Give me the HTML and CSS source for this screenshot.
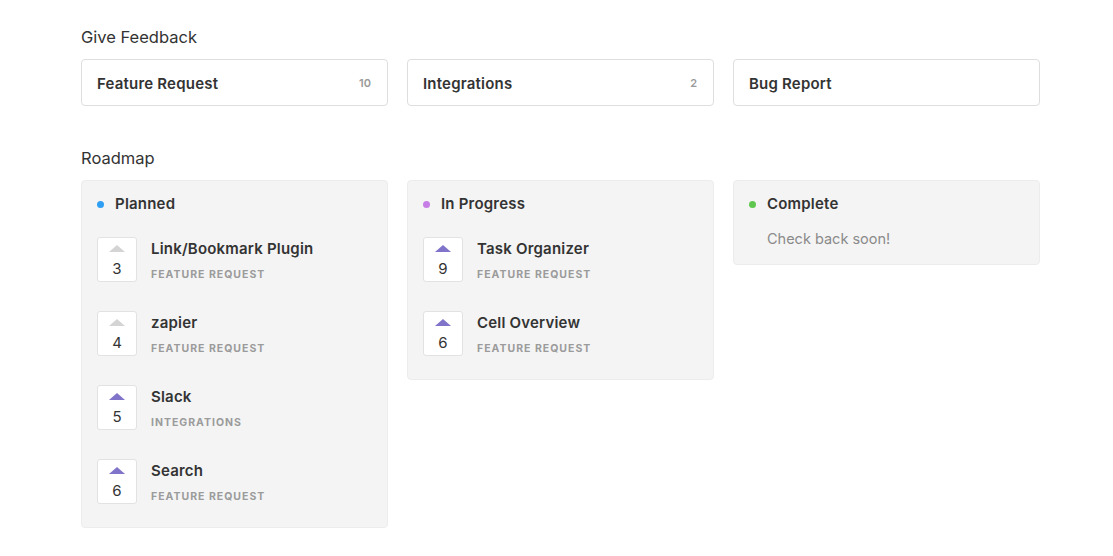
FILE: index.html
```html
<!DOCTYPE html>
<html>
<head>
<meta charset="utf-8">
<link rel="stylesheet" href="styles.css">
</head>
<body>
<div class="page">
  <h2 class="section-title">Give Feedback</h2>
  <div class="grid">
    <div class="board"><span class="board-name">Feature Request</span><span class="board-count">10</span></div>
    <div class="board"><span class="board-name">Integrations</span><span class="board-count">2</span></div>
    <div class="board"><span class="board-name">Bug Report</span></div>
  </div>

  <h2 class="section-title roadmap-title">Roadmap</h2>
  <div class="grid roadmap">
    <div class="column">
      <div class="col-head"><span class="dot dot-blue"></span>Planned</div>
      <div class="items">
        <div class="item">
          <div class="vote"><span class="tri tri-grey"></span><span class="num">3</span></div>
          <div class="info"><div class="title">Link/Bookmark Plugin</div><div class="cat">Feature Request</div></div>
        </div>
        <div class="item">
          <div class="vote"><span class="tri tri-grey"></span><span class="num">4</span></div>
          <div class="info"><div class="title">zapier</div><div class="cat">Feature Request</div></div>
        </div>
        <div class="item">
          <div class="vote"><span class="tri"></span><span class="num">5</span></div>
          <div class="info"><div class="title">Slack</div><div class="cat">Integrations</div></div>
        </div>
        <div class="item">
          <div class="vote"><span class="tri"></span><span class="num">6</span></div>
          <div class="info"><div class="title">Search</div><div class="cat">Feature Request</div></div>
        </div>
      </div>
    </div>
    <div class="column">
      <div class="col-head"><span class="dot dot-purple"></span>In Progress</div>
      <div class="items">
        <div class="item">
          <div class="vote"><span class="tri"></span><span class="num">9</span></div>
          <div class="info"><div class="title">Task Organizer</div><div class="cat">Feature Request</div></div>
        </div>
        <div class="item">
          <div class="vote"><span class="tri"></span><span class="num">6</span></div>
          <div class="info"><div class="title">Cell Overview</div><div class="cat">Feature Request</div></div>
        </div>
      </div>
    </div>
    <div class="column column-complete">
      <div class="col-head"><span class="dot dot-green"></span>Complete</div>
      <div class="empty">Check back soon!</div>
    </div>
  </div>
</div>
</body>
</html>
```
FILE: styles.css
```css
* { box-sizing: border-box; }
body {
  margin: 0;
  background: #fff;
  font-family: Inter, "Noto Sans", "Liberation Sans", sans-serif;
  color: #333;
}
.page {
  width: 959px;
  margin-left: 81px;
  padding-top: 27px;
}
.section-title {
  margin: 0 0 12px;
  font-size: 16.5px;
  line-height: 20px;
  font-weight: 400;
  color: #333;
}
.roadmap-title { margin-top: 42px; }
.grid {
  display: grid;
  grid-template-columns: repeat(3, 307px);
  column-gap: 19px;
  align-items: start;
}
.board {
  height: 47px;
  border: 1px solid #dedede;
  border-radius: 4px;
  display: flex;
  align-items: center;
  justify-content: space-between;
  padding: 1px 16px 0 15px;
}
.board-name {
  font-size: 15px;
  font-weight: 600;
  letter-spacing: 0.2px;
  color: #333;
}
.board-count {
  font-size: 11px;
  font-weight: 600;
  color: #999;
}
.column {
  background: #f4f4f4;
  border-radius: 4px;
  border: 1px solid #ececec;
  padding: 14px 15px 23px;
}
.column-complete { padding-bottom: 16px; }
.col-head {
  display: flex;
  align-items: center;
  font-size: 15px;
  font-weight: 600;
  letter-spacing: 0.2px;
  line-height: 18px;
  color: #333;
}
.dot {
  width: 7px;
  height: 7px;
  border-radius: 50%;
  margin: 0 11px 0 0;
}
.dot-blue { background: #2f9ff3; }
.dot-purple { background: #c67ee6; }
.dot-green { background: #5fc74f; }
.items {
  margin-top: 24px;
  display: flex;
  flex-direction: column;
  gap: 29px;
}
.item {
  display: flex;
  align-items: flex-start;
}
.vote {
  width: 40px;
  height: 45px;
  background: #fff;
  border: 1px solid #e2e2e2;
  border-radius: 3px;
  display: flex;
  flex-direction: column;
  align-items: center;
  padding-top: 7px;
  flex-shrink: 0;
}
.tri {
  width: 0;
  height: 0;
  border-left: 8px solid transparent;
  border-right: 8px solid transparent;
  border-bottom: 7px solid #7f74c9;
}
.tri-grey { border-bottom-color: #d4d4d4; }
.num {
  margin-top: 8px;
  font-size: 15px;
  line-height: 18px;
  color: #333;
}
.info {
  margin-left: 14px;
  padding-top: 2px;
}
.title {
  font-size: 15px;
  font-weight: 600;
  letter-spacing: 0.2px;
  line-height: 19px;
  color: #333;
}
.cat {
  margin-top: 10px;
  font-size: 10.5px;
  font-weight: 700;
  letter-spacing: 1px;
  text-transform: uppercase;
  color: #9b9b9b;
}
.empty {
  margin-top: 17px;
  margin-left: 18px;
  font-size: 14.5px;
  line-height: 18px;
  color: #8a8a8a;
}
```
